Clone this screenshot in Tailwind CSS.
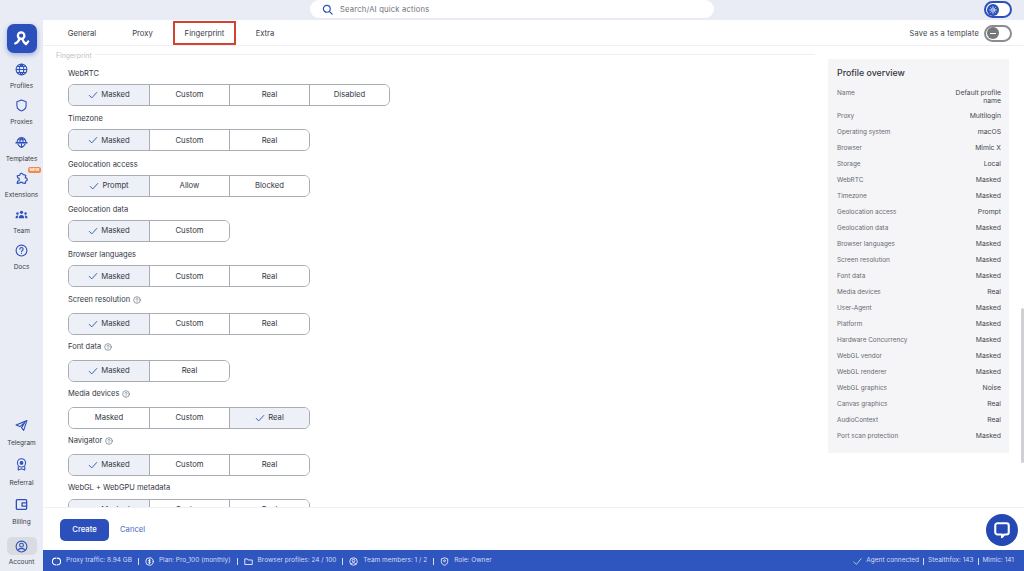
<!DOCTYPE html>
<html lang="en">
<head>
<meta charset="UTF-8">
<title>Create profile</title>
<script src="https://cdn.jsdelivr.net/npm/@tailwindcss/browser@4"></script>
</head>
<body class="overflow-hidden font-['Inter',sans-serif]">
<div class="flex h-[571px] w-[1024px] overflow-hidden bg-[#e9ecf4] text-[#33373f]">

  <!-- sidebar -->
  <aside class="flex w-[43px] shrink-0 flex-col items-center text-[6.500px] text-[#3c4048]">
    <div class="mt-[24px] flex h-[29px] w-[30px] items-center justify-center rounded-[7px] bg-[#2c50bb] shadow-[0_2px_5px_rgba(44,80,187,0.4)]">
      <svg width="17" height="17" viewBox="0 0 24 24" fill="none" stroke="white" stroke-width="3.2" stroke-linecap="round" stroke-linejoin="round"><circle cx="11.5" cy="8" r="4.6"/><path d="M3 19c3-1 5-3 6.500-7M13 12.500c1 3 3 6 5.500 7.500l3-4"/></svg>
    </div>
    <div class="mt-[10px] flex h-[36px] flex-col items-center">
      <svg width="13" height="13" viewBox="0 0 24 24" fill="none" stroke="#2c50bb" stroke-width="2"><circle cx="12" cy="12" r="10"/><path d="M2 12h20M12 2c-6 6-6 14 0 20M12 2c6 6 6 14 0 20M4 6.500h16M4 17.500h16"/></svg>
      <span class="mt-[5px] leading-[10px]">Profiles</span>
    </div>
    <div class="mt-[0.300px] flex h-[36px] flex-col items-center">
      <svg width="13" height="13" viewBox="0 0 24 24" fill="none" stroke="#2c50bb" stroke-width="2" stroke-linejoin="round"><path d="M12 2l8.500 3v7c0 5-3.500 8.500-8.500 10-5-1.500-8.500-5-8.500-10V5z"/></svg>
      <span class="mt-[5px] leading-[10px]">Proxies</span>
    </div>
    <div class="mt-[0.300px] flex h-[36px] flex-col items-center">
      <svg width="13" height="13" viewBox="0 0 24 24" fill="none" stroke="#2c50bb" stroke-width="2"><path d="M4 11a8 8 0 0 1 16 0M9 11c0-3 1-6 3-8 2 2 3 5 3 8M4.500 7h15"/><path d="M1 12.500h22" stroke-width="3"/><path d="M5 15c2 3 4 5 7 6 3-1 5-3 7-6M12 14v7"/></svg>
      <span class="mt-[5px] leading-[10px]">Templates</span>
    </div>
    <div class="relative mt-[0.300px] flex h-[36px] flex-col items-center">
      <svg width="13" height="13" viewBox="0 0 24 24" fill="none" stroke="#2c50bb" stroke-width="2.200" stroke-linejoin="round"><path d="M4 7l5-1a3 3 0 0 1 6-1l5 1-1 5a3 3 0 0 1 1 6l-1 4-5-1a3 3 0 0 0-5 0l-5 1 1-4a3 3 0 0 0 0-6z"/></svg>
      <span class="absolute top-[-5px] left-[23px] rounded-[2px] bg-[#f08a4b] px-[2px] text-[4px] leading-[6px] font-bold text-white">NEW</span>
      <span class="mt-[5px] leading-[10px]">Extensions</span>
    </div>
    <div class="mt-[0.300px] flex h-[36px] flex-col items-center">
      <svg width="13" height="13" viewBox="0 0 24 24" fill="#2c50bb"><circle cx="12" cy="8" r="3"/><circle cx="4.500" cy="10" r="2.300"/><circle cx="19.500" cy="10" r="2.300"/><path d="M7 19c0-4 2-6 5-6s5 2 5 6zM1 19c0-3 1-5 3.500-5 .5 0 1 0 1.500.3-.8 1.300-1 3-1 4.700zM23 19c0-3-1-5-3.500-5-.5 0-1 0-1.500.3.800 1.300 1 3 1 4.700z"/></svg>
      <span class="mt-[5px] leading-[10px]">Team</span>
    </div>
    <div class="mt-[0.300px] flex h-[36px] flex-col items-center">
      <svg width="13" height="13" viewBox="0 0 24 24" fill="none" stroke="#2c50bb" stroke-width="2" stroke-linecap="round"><circle cx="12" cy="12" r="10"/><path d="M9 9.500a3 3 0 1 1 4.500 2.600c-1 .6-1.500 1.200-1.500 2.400M12 17.500v.1"/></svg>
      <span class="mt-[5px] leading-[10px]">Docs</span>
    </div>

    <div class="mt-auto flex h-[39.500px] flex-col items-center">
      <svg width="13" height="13" viewBox="0 0 24 24" fill="none" stroke="#2c50bb" stroke-width="2" stroke-linejoin="round"><path d="M22 3L2 11l7 3 9-7-6 9 4 5z"/></svg>
      <span class="mt-[6.500px] leading-[10px]">Telegram</span>
    </div>
    <div class="flex h-[39.500px] flex-col items-center">
      <svg width="13" height="13" viewBox="0 0 24 24" fill="none" stroke="#2c50bb" stroke-width="2" stroke-linejoin="round"><circle cx="12" cy="9" r="7.500"/><circle cx="12" cy="9" r="2.500" fill="#2c50bb"/><path d="M6 15v7l6-2 6 2v-7"/></svg>
      <span class="mt-[6.500px] leading-[10px]">Referral</span>
    </div>
    <div class="flex h-[39.500px] flex-col items-center">
      <svg width="13" height="13" viewBox="0 0 24 24" fill="none" stroke="#2c50bb" stroke-width="2.400" stroke-linejoin="round"><rect x="2.500" y="3" width="19" height="18" rx="2"/><path d="M21 9h-8v6h8"/></svg>
      <span class="mt-[6.500px] leading-[10px]">Billing</span>
    </div>
    <div class="mb-[4px] flex flex-col items-center">
      <div class="flex h-[18px] w-[30px] items-center justify-center rounded-[5px] bg-[#d9dbe1]">
        <svg width="13" height="13" viewBox="0 0 24 24" fill="none" stroke="#2c50bb" stroke-width="2"><circle cx="12" cy="12" r="10"/><circle cx="12" cy="9.500" r="3.500"/><path d="M5.500 19c1.500-2.500 3.800-3.500 6.500-3.500s5 1 6.500 3.500"/></svg>
      </div>
      <span class="mt-[2px] leading-[10px]">Account</span>
    </div>
  </aside>

  <div class="flex min-w-0 flex-1 flex-col">
    <!-- top bar -->
    <header class="relative flex h-[20px] shrink-0">
      <div class="ml-[267px] flex h-[18px] w-[404px] items-center rounded-full bg-white pl-[12px] text-[7.600px] tracking-[0.2px] text-[#6d7179]">
        <svg width="11" height="11" viewBox="0 0 24 24" fill="none" stroke="#2c50bb" stroke-width="2.600" stroke-linecap="round"><circle cx="10.500" cy="10.500" r="7.500"/><path d="M16 16l6 6"/></svg>
        <span class="ml-[7px] mt-[2px]">Search/AI quick actions</span>
      </div>
      <div class="ml-[270px] mt-[1px] flex h-[17px] w-[28px] items-center rounded-full border-2 border-[#2c50bb] bg-white pl-[1px]">
        <span class="flex h-[12px] w-[12px] items-center justify-center rounded-full bg-[#2c50bb]">
          <svg width="8" height="8" viewBox="0 0 24 24" fill="none" stroke="white" stroke-width="2.500" stroke-linecap="round"><circle cx="12" cy="12" r="4"/><path d="M12 2v3M12 19v3M2 12h3M19 12h3M5 5l2 2M17 17l2 2M5 19l2-2M17 7l2-2"/></svg>
        </span>
      </div>
    </header>

    <!-- content -->
    <main class="relative flex min-h-0 flex-1 flex-col bg-white">
      <nav class="flex h-[26px] shrink-0 items-center border-b border-[#eff0f3] pt-[1px] text-[7.700px] text-[#3a3e46]">
        <span class="ml-[9px] mt-[2px] w-[60px] text-center">General</span>
        <span class="mt-[2px] w-[61px] text-center">Proxy</span>
        <span class="flex h-[24px] w-[63px] items-center justify-center border-2 border-[#d2442f] pt-[1px]">Fingerprint</span>
        <span class="mt-[2px] w-[58px] text-center">Extra</span>
        <span class="ml-auto mr-[5px] mt-[2px] text-[7.400px] tracking-[0.2px]">Save as a template</span>
        <span class="mr-[12px] flex h-[17px] w-[28px] items-center rounded-full border-2 border-[#8a8c92] bg-white pl-[1px]">
          <span class="flex h-[12px] w-[12px] items-center justify-center rounded-full bg-[#75777c]"><span class="h-[1px] w-[6px] bg-white"></span></span>
        </span>
      </nav>

      <div class="flex min-h-0 flex-1 overflow-hidden">
        <section class="w-[785px] shrink-0 pl-[13px] pr-[13px]">
          <div class="mt-[5px] flex h-[10px] items-center text-[6.900px] leading-[10px] text-[#bcbfc5]">
            <span>Fingerprint</span>
            <span class="ml-[3px] mb-[3px] h-px flex-1 bg-[#eff0f3]"></span>
          </div>
          <div id="rows" class="ml-[12px] mt-[6px]"></div>
        </section>

        <section class="relative min-w-0 flex-1">
          <div class="mt-[13px] h-[394px] w-[181px] bg-[#f5f5f7] pl-[9px] pr-[8px] pt-[8px]">
            <h3 class="text-[8.800px] leading-[12px] font-medium text-[#33373f]">Profile overview</h3>
            <div id="overview" class="mt-[10px] text-[6.400px] text-[#676b73]"></div>
          </div>
          <div class="absolute top-[262px] right-0 h-[155px] w-[3px] rounded-full bg-[#cfd1d6]"></div>
        </section>
      </div>

      <footer class="flex h-[43px] shrink-0 items-center border-t border-[#f0f1f4] bg-white pl-[17px] text-[7.700px]">
        <button class="mt-[1px] h-[22px] w-[49px] rounded-[5px] bg-[#2c50bb] font-medium text-white">Create</button>
        <span class="ml-[11px] mt-[2px] text-[#4c68c4]">Cancel</span>
      </footer>

      <div class="absolute right-[6px] bottom-[4px] flex h-[32px] w-[32px] items-center justify-center rounded-full bg-[#2448b4]">
        <svg width="18" height="18" viewBox="0 0 24 24" fill="none" stroke="white" stroke-width="2.800" stroke-linejoin="round"><path d="M6 3h12a3 3 0 0 1 3 3v9a3 3 0 0 1-3 3h-3l-3 3.500V18H6a3 3 0 0 1-3-3V6a3 3 0 0 1 3-3z"/></svg>
      </div>
    </main>

    <!-- status bar -->
    <footer class="flex h-[21px] shrink-0 items-center bg-[#2f55bf] pl-[9px] pr-[10px] pt-[1px] text-[6.500px] text-[#d3dbf3]">
      <svg width="9" height="9" viewBox="0 0 24 24" fill="none" stroke="white" stroke-width="3" stroke-linecap="round"><path d="M10 3a9 9 0 0 0 0 18M14 3a9 9 0 0 1 0 18"/></svg>
      <span class="ml-[5px]">Proxy traffic: 8.94 GB</span>
      <span class="mx-[6px] h-[7px] w-px bg-[#d3dbf3]"></span>
      <svg width="9" height="9" viewBox="0 0 24 24" fill="none" stroke="white" stroke-width="2.200" stroke-linecap="round"><circle cx="12" cy="12" r="10"/><path d="M15 8.500c-1-1-5-1.500-5.500 1s5.500 2.500 5 5-4.500 1.500-5.500.5M12 5.500v13"/></svg>
      <span class="ml-[5px]">Plan: Pro_100 (monthly)</span>
      <span class="mx-[6px] h-[7px] w-px bg-[#d3dbf3]"></span>
      <svg width="9" height="9" viewBox="0 0 24 24" fill="none" stroke="white" stroke-width="2.200" stroke-linejoin="round"><path d="M2 5h7l2 3h11v12H2z"/></svg>
      <span class="ml-[5px]">Browser profiles: 24 / 100</span>
      <span class="mx-[6px] h-[7px] w-px bg-[#d3dbf3]"></span>
      <svg width="9" height="9" viewBox="0 0 24 24" fill="none" stroke="white" stroke-width="2.200"><circle cx="12" cy="12" r="10"/><circle cx="12" cy="9.500" r="3.500"/><path d="M5.500 19c1.500-2.500 3.800-3.500 6.500-3.500s5 1 6.500 3.500"/></svg>
      <span class="ml-[5px]">Team members: 1 / 2</span>
      <span class="mx-[6px] h-[7px] w-px bg-[#d3dbf3]"></span>
      <svg width="9" height="9" viewBox="0 0 24 24" fill="none" stroke="white" stroke-width="2.200" stroke-linejoin="round"><path d="M12 2l8.500 3v7c0 5-3.500 8.500-8.500 10-5-1.500-8.500-5-8.500-10V5z"/><circle cx="12" cy="10" r="2.500"/></svg>
      <span class="ml-[5px]">Role: Owner</span>

      <svg class="ml-auto" width="9" height="9" viewBox="0 0 24 24" fill="none" stroke="#8fdcc0" stroke-width="2.500" stroke-linecap="round" stroke-linejoin="round"><path d="M2 13l7 7L22 4"/></svg>
      <span class="ml-[4px]">Agent connected</span>
      <span class="mx-[4px] h-[7px] w-px bg-[#d3dbf3]"></span>
      <span>Stealthfox: 143</span>
      <span class="mx-[4px] h-[7px] w-px bg-[#d3dbf3]"></span>
      <span>Mimic: 141</span>
    </footer>
  </div>
</div>

<script>
  const check = `<svg class="mr-[3px]" width="10" height="10" viewBox="0 0 24 24" fill="none" stroke="#2c50bb" stroke-width="2.200" stroke-linecap="round" stroke-linejoin="round"><path d="M3 13l6 6L21 6"/></svg>`;
  const help = `<svg class="ml-[3px]" width="8" height="8" viewBox="0 0 24 24" fill="none" stroke="#5b5f67" stroke-width="1.800" stroke-linecap="round"><circle cx="12" cy="12" r="10"/><path d="M9 9.500a3 3 0 1 1 4.500 2.600c-1 .6-1.500 1.200-1.500 2.400M12 17.500v.1"/></svg>`;

  // label, options, selected index, has help icon, row height, gap above the buttons
  const rows = [
    ['WebRTC', ['Masked', 'Custom', 'Real', 'Disabled'], 0, false, 'h-[45.330px]', 'mt-[3px]'],
    ['Timezone', ['Masked', 'Custom', 'Real'], 0, false, 'h-[45.330px]', 'mt-[3px]'],
    ['Geolocation access', ['Prompt', 'Allow', 'Blocked'], 0, false, 'h-[45.330px]', 'mt-[3px]'],
    ['Geolocation data', ['Masked', 'Custom'], 0, false, 'h-[45.330px]', 'mt-[3px]'],
    ['Browser languages', ['Masked', 'Custom', 'Real'], 0, false, 'h-[44.830px]', 'mt-[3px]'],
    ['Screen resolution', ['Masked', 'Custom', 'Real'], 0, true, 'h-[47px]', 'mt-[5.500px]'],
    ['Font data', ['Masked', 'Real'], 0, true, 'h-[47px]', 'mt-[5.500px]'],
    ['Media devices', ['Masked', 'Custom', 'Real'], 2, true, 'h-[47px]', 'mt-[5.500px]'],
    ['Navigator', ['Masked', 'Custom', 'Real'], 0, true, 'h-[47px]', 'mt-[5.500px]'],
    ['WebGL + WebGPU metadata', ['Masked', 'Custom', 'Real'], 0, false, 'h-[47px]', 'mt-[3.500px]'],
  ];

  document.getElementById('rows').innerHTML = rows.map(([label, options, selected, hasHelp, height, gap]) => `
    <div class="${height}">
      <div class="flex h-[14px] items-center text-[7.500px] leading-[14px] text-[#33373f]">${label}${hasHelp ? help : ''}</div>
      <div class="${gap} flex h-[22px] w-fit overflow-hidden rounded-[6px] border border-[#a9acb3]">
        ${options.map((option, i) => `
          <div class="flex h-full w-[80px] items-center justify-center text-[7.700px] ${i ? 'border-l border-[#a9acb3]' : ''} ${i === selected ? 'bg-[#eef0f7]' : 'bg-white'}">${i === selected ? check : ''}${option}</div>
        `).join('')}
      </div>
    </div>
  `).join('');

  const overview = [
    ['Name', 'Default profile name'], ['Proxy', 'Multilogin'], ['Operating system', 'macOS'],
    ['Browser', 'Mimic X'], ['Storage', 'Local'], ['WebRTC', 'Masked'], ['Timezone', 'Masked'],
    ['Geolocation access', 'Prompt'], ['Geolocation data', 'Masked'], ['Browser languages', 'Masked'],
    ['Screen resolution', 'Masked'], ['Font data', 'Masked'], ['Media devices', 'Real'],
    ['User-Agent', 'Masked'], ['Platform', 'Masked'], ['Hardware Concurrency', 'Masked'],
    ['WebGL vendor', 'Masked'], ['WebGL renderer', 'Masked'], ['WebGL graphics', 'Noise'],
    ['Canvas graphics', 'Real'], ['AudioContext', 'Real'], ['Port scan protection', 'Masked'],
  ];

  document.getElementById('overview').innerHTML = overview.map(([name, value], i) => `
    <div class="flex justify-between ${i === 0 ? 'h-[23px]' : 'h-[16px]'} leading-[8px]">
      <span>${name}</span>
      <span class="${i === 0 ? 'w-[50px]' : ''} text-right text-[6.800px] text-[#44484f]">${value}</span>
    </div>
  `).join('');
</script>
</body>
</html>
